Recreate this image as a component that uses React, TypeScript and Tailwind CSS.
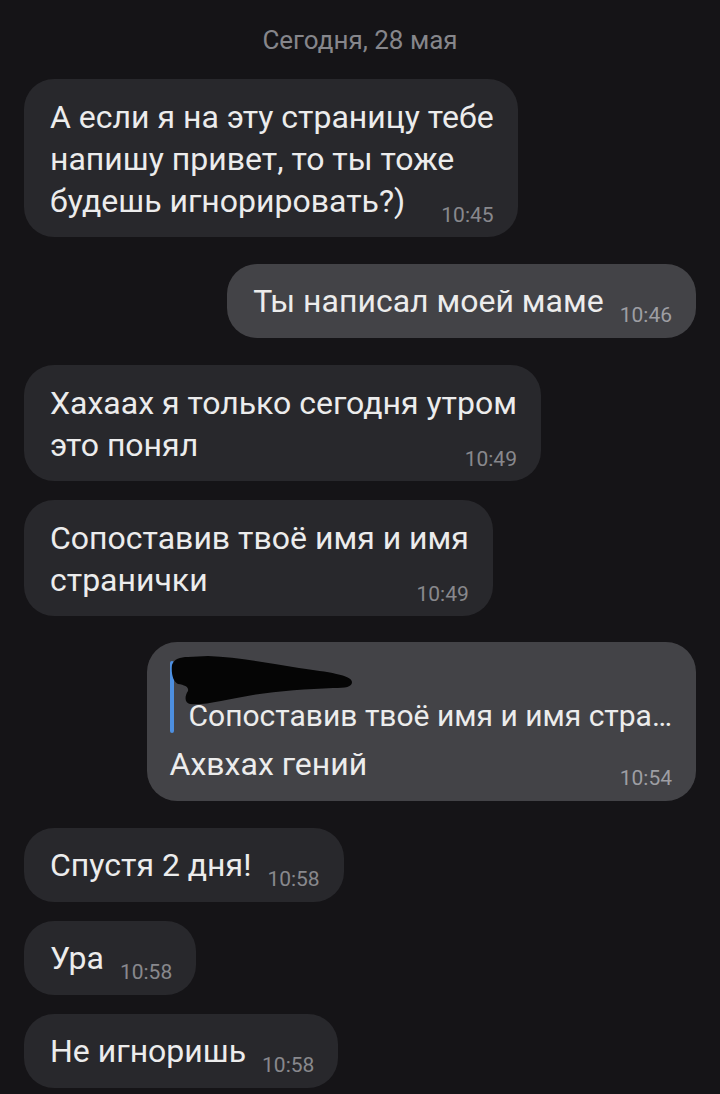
import React from "react";

type Msg = {
  id: number;
  out?: boolean;
  lines: string[];
  time: string;
  reply?: string;
  gap: string;
};

const messages: Msg[] = [
  { id: 1, lines: ["А если я на эту страницу тебе", "напишу привет, то ты тоже", "будешь игнорировать?)"], time: "10:45", gap: "mt-0" },
  { id: 2, out: true, lines: ["Ты написал моей маме"], time: "10:46", gap: "mt-[27px]" },
  { id: 3, lines: ["Хахаах я только сегодня утром", "это понял"], time: "10:49", gap: "mt-[27px]" },
  { id: 4, lines: ["Сопоставив твоё имя и имя", "странички"], time: "10:49", gap: "mt-[19px]" },
  { id: 5, out: true, reply: "Сопоставив твоё имя и имя стра…", lines: ["Ахвхах гений"], time: "10:54", gap: "mt-[26px]" },
  { id: 6, lines: ["Спустя 2 дня!"], time: "10:58", gap: "mt-[27px]" },
  { id: 7, lines: ["Ура"], time: "10:58", gap: "mt-[19px]" },
  { id: 8, lines: ["Не игноришь"], time: "10:58", gap: "mt-[19px]" },
];

// закрашенное имя автора цитаты
function Scribble() {
  return (
    <svg className="absolute left-[21px] top-[11px]" width="190" height="60" viewBox="0 0 190 60">
      <path
        d="M4 12 C6 6 12 4 20 4 L40 3 C70 4 100 10 131 15 C160 19 184 22 184 29 C184 34 178 35 165 35 C140 36 110 38 85 42 C60 46 35 53 22 51 C17 50 16 44 20 38 C21 34 17 32 10 31 C5 29 3 20 4 12 Z"
        fill="#050505"
      />
    </svg>
  );
}

function Bubble({ m }: { m: Msg }) {
  const last = m.lines[m.lines.length - 1];
  const rest = m.lines.slice(0, -1);
  const single = m.lines.length === 1 && !m.reply;
  return (
    <div className={`flex ${m.out ? "justify-end" : "justify-start"} ${m.gap}`}>
      <div
        className={`relative rounded-[30px] pr-[24px] ${m.out ? "bg-[#434347]" : "bg-[#28282c]"} ${
          m.reply ? "pt-[19px] pl-[23px] pb-[16px]" : single ? "pl-[26px] pt-[16px] pb-[16px]" : "pl-[26px] pt-[17px] pb-[15px]"
        }`}
      >
        {m.reply && (
          <>
            <div className="flex mb-[10px]">
              <div className="w-[4px] h-[72px] rounded-full bg-[#4d8fe0]" />
              <div className="flex flex-col pl-[15px]">
                <div className="h-[37px]" />
                <div className="text-[30px] leading-[35px] text-[#ececec] whitespace-nowrap">{m.reply}</div>
              </div>
            </div>
            <Scribble />
          </>
        )}
        <div className="flex flex-col text-[32px] leading-[42px] text-[#ececec]">
          {rest.map((l) => (
            <div key={l} className="whitespace-nowrap">{l}</div>
          ))}
          <div className="flex items-end justify-between gap-[16px]">
            <span className="whitespace-nowrap">{last}</span>
            <span
              className={`text-[21px] leading-none whitespace-nowrap translate-y-[4px] ${
                m.out ? "text-[#9e9ea3]" : "text-[#88888d]"
              }`}
            >
              {m.time}
            </span>
          </div>
        </div>
      </div>
    </div>
  );
}

export default function App() {
  return (
    <div className="min-h-[1094px] w-[720px] bg-[#151417] px-[24px] pt-[27px] pb-[10px] font-['Roboto',sans-serif] overflow-hidden">
      <div className="text-center text-[26px] leading-[26px] text-[#86868b] mb-[26px]">Сегодня, 28 мая</div>
      {messages.map((m) => (
        <Bubble key={m.id} m={m} />
      ))}
    </div>
  );
}
